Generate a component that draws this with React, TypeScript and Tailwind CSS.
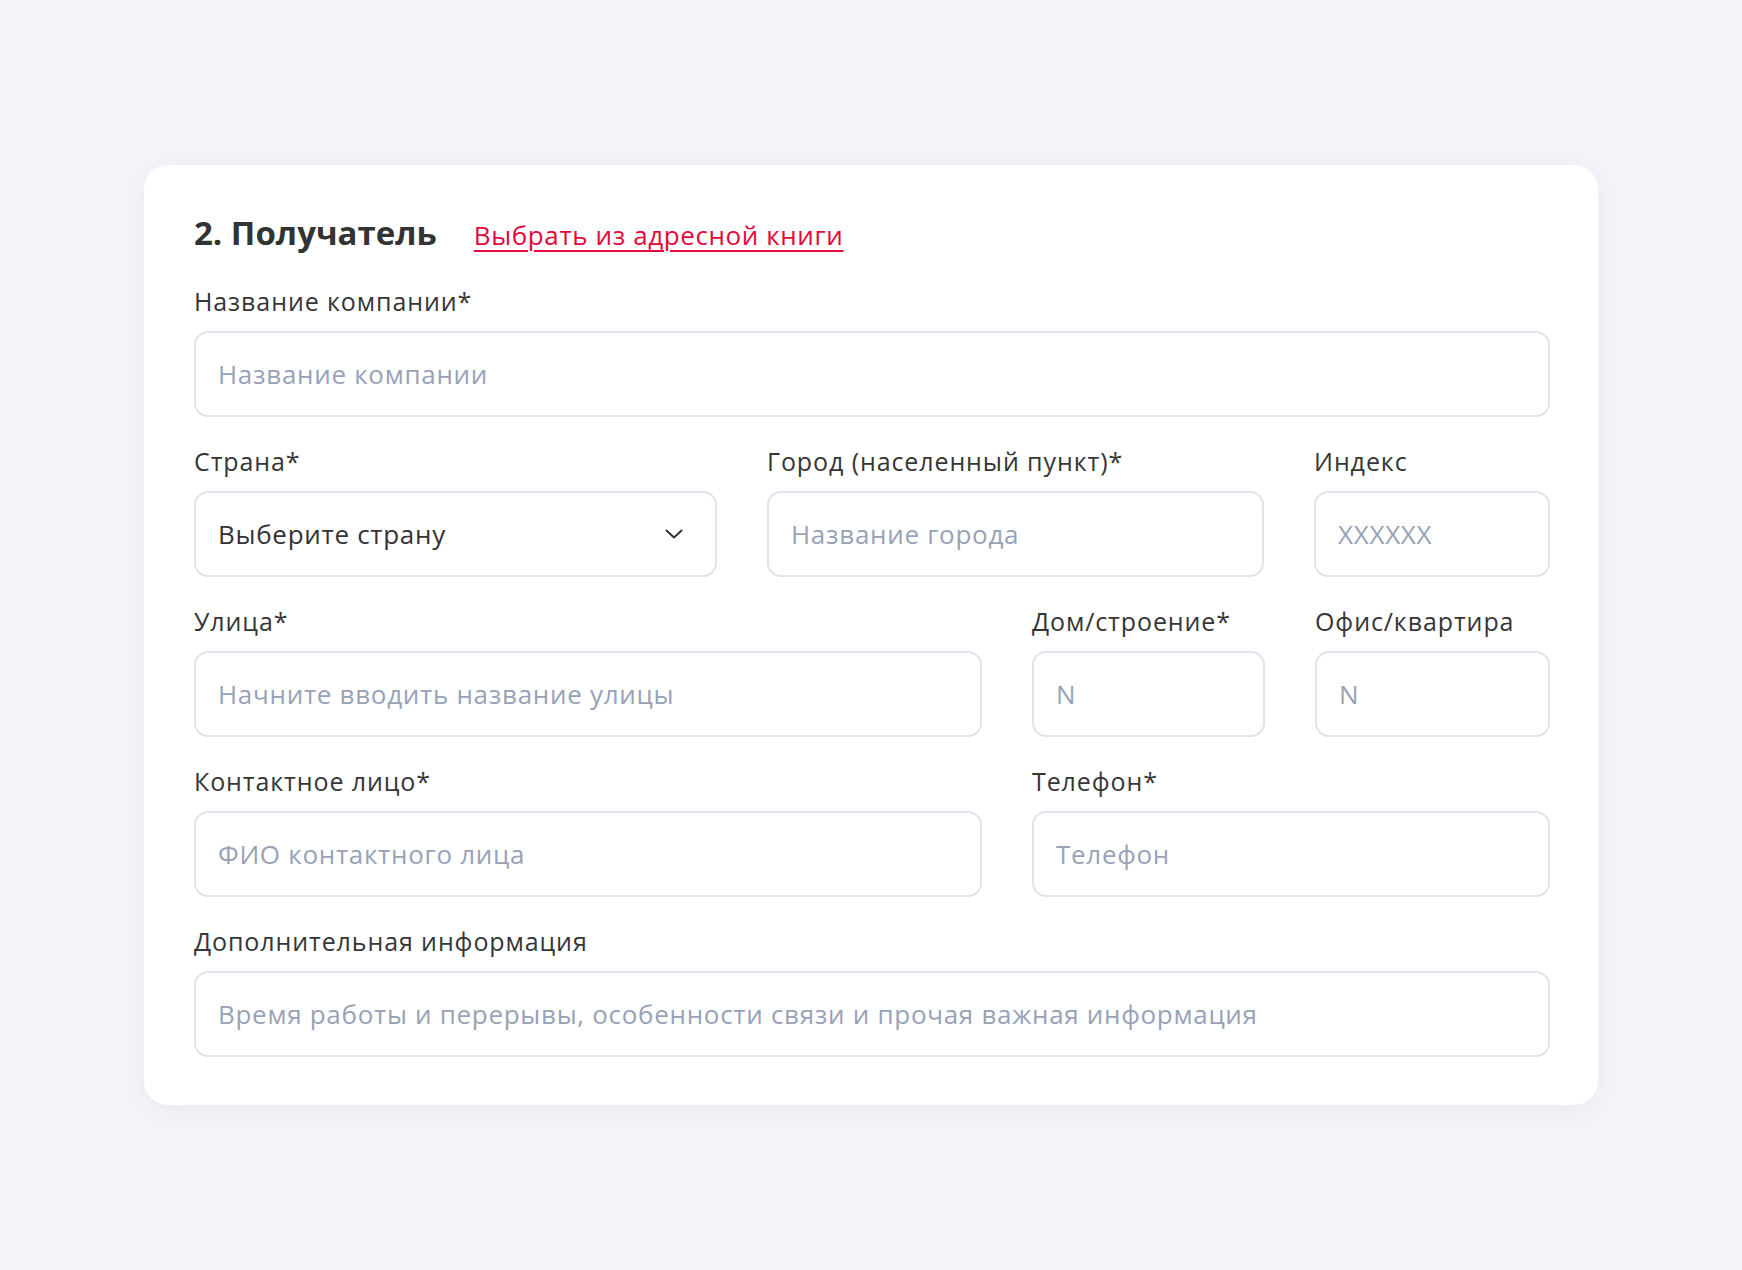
import React from "react";

const font = { fontFamily: '"Open Sans", "Noto Sans", sans-serif' };

function Field({ label, placeholder }: { label: string; placeholder: string }) {
  return (
    <div className="flex flex-col">
      <label className="text-[25px] leading-[30px] text-[#363636] mb-[15px] tracking-[0.9px]">{label}</label>
      <input
        type="text"
        placeholder={placeholder}
        className="h-[86px] w-full rounded-[14px] border-2 border-[#dfe4ee] bg-white px-[22px] text-[26px] tracking-[0.7px] text-[#333333] outline-none placeholder:text-[#98a2b7]"
      />
    </div>
  );
}

function CountrySelect() {
  return (
    <div className="flex flex-col">
      <label className="text-[25px] leading-[30px] text-[#363636] mb-[15px] tracking-[0.9px]">Страна*</label>
      <button className="h-[86px] w-full rounded-[14px] border-2 border-[#dfe4ee] bg-white px-[22px] flex items-center justify-between text-[26px] tracking-[0.7px] text-[#333333]">
        <span>Выберите страну</span>
        <svg className="w-[18px] h-[10px] mr-[10px]" viewBox="0 0 18 10" fill="none" stroke="#333333" strokeWidth="2" strokeLinecap="round" strokeLinejoin="round">
          <path d="M1.5 1.5L9 8.5L16.5 1.5" />
        </svg>
      </button>
    </div>
  );
}

export default function App() {
  return (
    <div className="min-h-screen w-full bg-[#f4f5f9] flex items-center justify-center" style={font}>
      <div className="w-[1454px] bg-white rounded-[24px] shadow-[0_6px_30px_rgba(40,50,90,0.06)] pl-[50px] pr-[48px] pt-[48px] pb-[48px]">
        {/* Заголовок */}
        <div className="flex items-baseline gap-[37px] h-[40px]">
          <h2 className="text-[33px] leading-[40px] font-bold text-[#333333]">2. Получатель</h2>
          <a href="#" className="text-[26px] leading-[40px] tracking-[0.6px] text-[#e3093a] underline underline-offset-[5px] decoration-2">
            Выбрать из адресной книги
          </a>
        </div>

        <div className="mt-[33px] flex flex-col gap-[29px]">
          <Field label="Название компании*" placeholder="Название компании" />

          <div className="grid grid-cols-[523px_497px_1fr] gap-x-[50px]">
            <CountrySelect />
            <Field label="Город (населенный пункт)*" placeholder="Название города" />
            <Field label="Индекс" placeholder="XXXXXX" />
          </div>

          <div className="grid grid-cols-[1fr_233px_235px] gap-x-[50px]">
            <Field label="Улица*" placeholder="Начните вводить название улицы" />
            <Field label="Дом/строение*" placeholder="N" />
            <Field label="Офис/квартира" placeholder="N" />
          </div>

          <div className="grid grid-cols-[1fr_518px] gap-x-[50px]">
            <Field label="Контактное лицо*" placeholder="ФИО контактного лица" />
            <Field label="Телефон*" placeholder="Телефон" />
          </div>

          <Field
            label="Дополнительная информация"
            placeholder="Время работы и перерывы, особенности связи и прочая важная информация"
          />
        </div>
      </div>
    </div>
  );
}
